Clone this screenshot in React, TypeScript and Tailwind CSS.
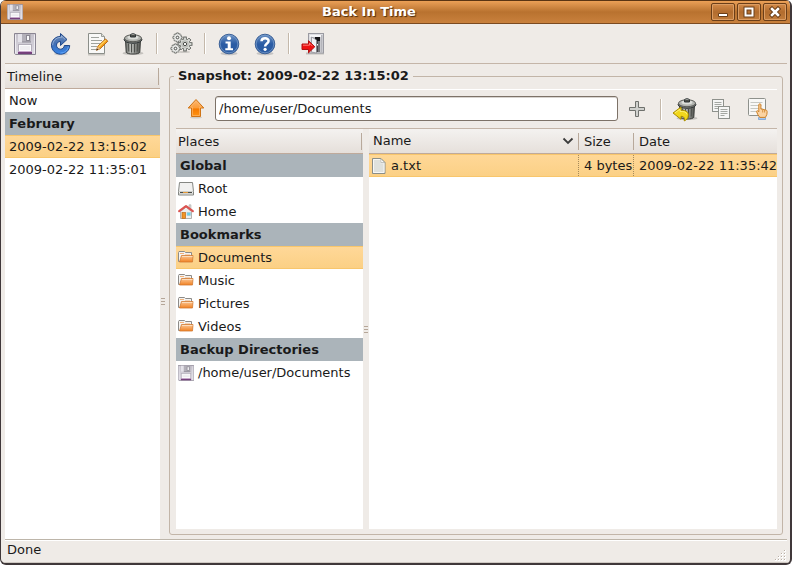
import React, { useId, useState } from "react";

type IconProps = { size?: number };

function FloppyIcon({ size = 24 }: IconProps) {
  const id = useId();
  return (
    <svg width={size} height={size} viewBox={size < 20 ? "1 1 22 22" : "0 0 24 24"} aria-hidden="true">
      <defs>
        <linearGradient id={id} x1="0" y1="0" x2="0" y2="1">
          <stop offset="0" stopColor="#c3bfc9" />
          <stop offset="1" stopColor="#dfdce4" />
        </linearGradient>
      </defs>
      <path d="M1.500 1.500h21v21h-20l-1-1z" fill={`url(#${id})`} stroke="#8a8592" />
      <path d="M2.500 2.500v18.500M21.500 2.500v19" stroke="#eeecf2" />
      <rect x="5" y="2" width="4" height="8" fill="#e4e2e9" />
      <rect x="9" y="2" width="9" height="8" fill="#b3b0b9" />
      <path d="M9 10h9" stroke="#8f8b97" />
      <rect x="13.500" y="3.500" width="3" height="5" fill="#f8f8fa" stroke="#8b8892" />
      <rect x="5.500" y="12.500" width="13" height="9" fill="#fcfbfd" stroke="#b3aeba" />
      <path d="M7 15h10M7 17h10" stroke="#e3e0e6" />
      <rect x="5" y="19" width="14" height="1" fill="#c9a8cd" />
      <rect x="5" y="20" width="14" height="2" fill="#75407c" />
    </svg>
  );
}

function RefreshIcon() {
  return (
    <svg width="24" height="24" viewBox="0 0 24 24" aria-hidden="true">
      <defs>
        <linearGradient id="refresh" x1="0" y1="0" x2="0" y2="1">
          <stop offset="0" stopColor="#7590b8" />
          <stop offset="0.500" stopColor="#426fb4" />
          <stop offset="1" stopColor="#3585ea" />
        </linearGradient>
      </defs>
      <ellipse cx="12" cy="22" rx="7" ry="1.300" fill="#cfccc9" />
      <path
        d="M11.500 1.500v2.800C6.500 4.500 2.500 8.300 2.500 13.200c0 5 4 9 9 9s9-3.700 9.200-8.700h-5.400c-.1 2.100-1.600 3.700-3.800 3.700-2.300 0-4-1.700-4-4 0-2 1.600-3.700 4-3.800v4.100l6.500-6z"
        fill="url(#refresh)"
        stroke="#20488a"
        strokeLinejoin="round"
      />
      <path d="M3.700 13.200c0-4.300 3.400-7.700 7.800-7.800h1V4l3.800 3.500" fill="none" stroke="#a3bbdd" strokeWidth="0.800" />
      <path d="M19.400 14.500c-.6 3.800-3.800 6.500-7.900 6.500" fill="none" stroke="#6fb0ff" strokeWidth="0.800" />
    </svg>
  );
}

function EditIcon() {
  return (
    <svg width="24" height="24" viewBox="0 0 24 24" aria-hidden="true">
      <path d="M3 22.500h17" stroke="#c8c5c0" strokeWidth="2" />
      <path d="M3.500 1.500h13l3 3v17h-16z" fill="#f8f8f7" stroke="#8b8e89" strokeLinejoin="round" />
      <path d="M16.500 1.500v3h3" fill="#dedfdc" stroke="#9b9e98" />
      <path d="M6 5.500h8M6 8.500h11M6 11.500h9M6 14.500h6M6 17.500h5" stroke="#9fa29d" />
      <path d="M11.500 18.200l1.300-3.900 7.700-7.400 2.300 2.300-7.700 7.600z" fill="#f6a01a" stroke="#b05b05" strokeWidth="0.900" strokeLinejoin="round" />
      <path d="M13.800 14.800l7-6.700" stroke="#ffd35c" strokeWidth="1.200" />
      <path d="M11.500 18.200l1.300-3.900 2.300 2.500z" fill="#e3bd8b" />
      <path d="M11.300 18.400l.7-2 1.200 1.300z" fill="#2b1a08" />
    </svg>
  );
}

function TrashShape() {
  const id = useId();
  return (
    <>
      <defs>
        <linearGradient id={id} x1="0" x2="1">
          <stop offset="0" stopColor="#646662" />
          <stop offset="0.350" stopColor="#c0c2be" />
          <stop offset="0.650" stopColor="#8a8c88" />
          <stop offset="1" stopColor="#50524e" />
        </linearGradient>
      </defs>
      <ellipse cx="12" cy="21.300" rx="10.500" ry="1.800" fill="#c4c1bd" />
      <path d="M4.500 8l.7 12.300c1 2.300 12.600 2.300 13.600 0L19.500 8z" fill={`url(#${id})`} stroke="#3c3e3b" />
      <path d="M7.500 11.500l.3 8M10.500 12v8.500M13.500 12v8.500M16.500 11.500l-.3 8" stroke="#4d4f4b" />
      <ellipse cx="12" cy="7.500" rx="8.900" ry="3.800" fill="#787a76" stroke="#2e3436" />
      <ellipse cx="12" cy="6.200" rx="8.500" ry="3.500" fill="#b2b4b0" stroke="#4b4d49" strokeWidth="0.800" />
      <ellipse cx="12" cy="5.500" rx="5.500" ry="1.900" fill="#dcdeda" />
      <path d="M9.500 5V3c0-1.700 5-1.700 5 0v2z" fill="#4a4c48" stroke="#2e3436" />
      <path d="M10.500 2.700c.7-.5 2.300-.5 3 0" stroke="#b0b2ae" fill="none" />
    </>
  );
}

function TrashIcon() {
  return (
    <svg width="24" height="24" viewBox="0 0 24 24" aria-hidden="true">
      <TrashShape />
    </svg>
  );
}

function RestoreIcon() {
  return (
    <svg width="26" height="26" viewBox="0 0 26 26" aria-hidden="true">
      <g transform="translate(3 1)">
        <TrashShape />
      </g>
      <path
        d="M1 17l8-6v3.300c5.500-.4 7.800 2.200 7.300 5.700-.3 2.400-1.900 4.100-4.100 4.900.8-2.700-.1-4.500-3.200-4.600v3z"
        fill="#f2d71b"
        stroke="#a88c00"
        strokeLinejoin="round"
      />
      <path d="M3 16.800l5-3.600v2.200c4-.2 6.500.8 7 3" fill="none" stroke="#fff27f" strokeWidth="0.900" />
    </svg>
  );
}

const squareTeeth = [0, 90, 180, 270];
const roundTeeth = [0, 45, 90, 135, 180, 225, 270, 315];

function SmallGear({ x, y }: { x: number; y: number }) {
  return (
    <g transform={`translate(${x} ${y})`}>
      {squareTeeth.map((a) => (
        <path key={a} d="M-1-4.500h2v3h-2z" transform={`rotate(${a})`} fill="#e6e7e5" stroke="#5b5e5a" />
      ))}
      <rect x="-3.500" y="-3.500" width="7" height="7" rx="1" fill="#e6e7e5" stroke="#5b5e5a" strokeDasharray="1.500 0.500" />
      <path d="M-1-4h2v8h-2zM-4-1h8v2h-8z" fill="#e6e7e5" />
      <circle r="1.300" fill="#f8f8f8" stroke="#4b4e4a" />
    </g>
  );
}

function GearsIcon() {
  return (
    <svg width="24" height="24" viewBox="0 0 24 24" aria-hidden="true">
      <ellipse cx="15" cy="20" rx="6" ry="1" fill="#cbc8c4" />
      <g transform="translate(16 12)">
        {roundTeeth.map((a) => (
          <rect key={a} x="-1.300" y="-7" width="2.600" height="4" transform={`rotate(${a})`} fill="#d3d5d1" stroke="#5b5e5a" strokeWidth="0.900" />
        ))}
        <circle r="5" fill="#d8dad6" stroke="#6b6e6a" strokeWidth="0.800" />
        {roundTeeth.map((a) => (
          <rect key={a} x="-0.900" y="-6" width="1.800" height="3" transform={`rotate(${a})`} fill="#d8dad6" />
        ))}
        <circle r="3.200" fill="none" stroke="#a5a8a3" strokeWidth="0.800" />
        <circle r="1.700" fill="#f5f4f2" stroke="#4b4e4a" />
      </g>
      <SmallGear x={8.500} y={5.500} />
      <SmallGear x={6.500} y={16.500} />
    </svg>
  );
}

function BlueDisc({ kind }: { kind: "info" | "help" }) {
  const id = useId();
  return (
    <svg width="24" height="24" viewBox="0 0 24 24" aria-hidden="true">
      <defs>
        <linearGradient id={id} x1="0" y1="0" x2="0" y2="1">
          <stop offset="0" stopColor="#6d93c5" />
          <stop offset="0.500" stopColor="#2b5ca4" />
          <stop offset="1" stopColor="#2a5ba2" />
        </linearGradient>
      </defs>
      <ellipse cx="12" cy="21.500" rx="8.500" ry="1.800" fill="#c5c3c3" />
      <circle cx="12" cy="12" r="9.800" fill={`url(#${id})`} stroke="#3a5f96" />
      <circle cx="12" cy="12" r="8.800" fill="none" stroke="#7d9fcc" strokeWidth="0.700" />
      {kind === "info" ? (
        <>
          <circle cx="12" cy="6.300" r="2" fill="#fff" />
          <path d="M8.500 9.500h5.200v6.800h2.300v1.900H8.300v-1.900h2.400v-4.900H8.500z" fill="#fff" />
        </>
      ) : (
        <>
          <path d="M8.500 9.300C8.600 5.400 15.700 5.300 15.600 9c0 2.500-3.500 2.700-3.500 5.500" fill="none" stroke="#fff" strokeWidth="2.500" />
          <circle cx="12.100" cy="17.300" r="1.600" fill="#fff" />
        </>
      )}
    </svg>
  );
}

function ExitIcon() {
  return (
    <svg width="24" height="24" viewBox="0 0 24 24" aria-hidden="true">
      <path d="M5 20.500h18v2H5z" fill="#c3c0bd" />
      <rect x="7.500" y="1.500" width="15" height="19.500" fill="#dedee2" stroke="#9a9aa1" />
      <path d="M20.500 3v17.500" stroke="#b5b5bb" strokeWidth="2" />
      <rect x="9" y="3" width="11" height="2" fill="#f6f6f8" />
      <path d="M10 5h9v16h-9z" fill="#b8b8be" />
      <path d="M14 5h5v15h-5z" fill="#161618" />
      <path d="M16.500 9h2.500v11h-2.500z" fill="#75757a" />
      <path d="M10.500 5l5 3v13l-5-1z" fill="#f1f1f4" stroke="#8b8b91" strokeWidth="0.700" />
      <path d="M16.500 12v1.500" stroke="#fff" />
      <path d="M1 12h6.500V8.700l6.300 6.100-6.300 6V17.500H1z" fill="#ee1111" stroke="#b01010" strokeLinejoin="round" />
      <path d="M2 13.200h6.500v-2l3 3" fill="none" stroke="#ff8a80" strokeWidth="0.900" />
    </svg>
  );
}

function UpIcon() {
  return (
    <svg width="24" height="24" viewBox="0 0 24 24" aria-hidden="true">
      <defs>
        <linearGradient id="up" x1="0" y1="0" x2="0" y2="1">
          <stop offset="0" stopColor="#fcb671" />
          <stop offset="0.500" stopColor="#fb9c3a" />
          <stop offset="0.550" stopColor="#f57900" />
          <stop offset="1" stopColor="#ff9414" />
        </linearGradient>
      </defs>
      <ellipse cx="12" cy="20.500" rx="6" ry="1" fill="#d0ccc6" />
      <path d="M12 2.500l7.800 8.500h-3.300v8.500h-9V11H4.200z" fill="url(#up)" stroke="#cf7417" strokeLinejoin="round" />
      <path d="M12 4.200l5.500 6h-2v8.300h-7v-8.300h-2z" fill="none" stroke="#ffbe78" strokeWidth="0.600" />
    </svg>
  );
}

function PlusIcon() {
  return (
    <svg width="24" height="24" viewBox="0 0 24 24" aria-hidden="true">
      <path d="M10.500 4.500h3v6h6v3h-6v6h-3v-6h-6v-3h6z" fill="#cfd0cd" stroke="#6f716d" />
    </svg>
  );
}

function CopyIcon() {
  return (
    <svg width="24" height="24" viewBox="0 0 24 24" aria-hidden="true">
      <rect x="3.500" y="2.500" width="11" height="12" fill="#f6f6f5" stroke="#8e918c" />
      <path d="M5.500 5.500h7M5.500 7.500h7M5.500 9.500h7M5.500 11.500h4" stroke="#a4a7a2" />
      <rect x="9.500" y="9.500" width="11" height="12" fill="#f6f6f5" stroke="#8e918c" />
      <path d="M11.500 12.500h7M11.500 14.500h7M11.500 16.500h7M11.500 18.500h4" stroke="#a4a7a2" />
    </svg>
  );
}

function SelectIcon() {
  return (
    <svg width="24" height="24" viewBox="0 0 24 24" aria-hidden="true">
      <rect x="3.500" y="1.500" width="17" height="17" rx="1" fill="#f8f8f7" stroke="#8e918c" />
      <path d="M5.500 5.500h12M5.500 8.500h11M5.500 11.500h12M5.500 14.500h6" stroke="#c6c8c4" />
      <path d="M13.500 20.500h7v2h-7z" fill="#a9c8ee" stroke="#5c8fcd" strokeWidth="0.600" />
      <path
        d="M13.800 7.800c.1-1.400 2-1.400 2.100 0v4.200l1.800.3 1.700.3 1.600.5c1 .3 1.100 1 1.100 2l-.3 2.600-1.400 2.700h-5.600l-1.900-2.700-1.300-3c-.3-1.100 1.200-1.500 2.200.2z"
        fill="#fbd3a2"
        stroke="#cf8126"
        strokeLinejoin="round"
      />
      <path d="M17.700 12.500v3M19.600 13v2.500" stroke="#cf8126" strokeWidth="0.800" />
    </svg>
  );
}

function DriveIcon() {
  return (
    <svg width="16" height="16" viewBox="0 0 16 16" aria-hidden="true">
      <path d="M1.500 1.500h13l1 9v3.500H.5v-3.500z" fill="#f1f1f0" stroke="#858783" strokeLinejoin="round" />
      <path d="M1 10.500h14" stroke="#cfd1cd" />
      <path d="M2 11.500h12" stroke="#4a4c48" />
      <path d="M5 11.500h5" stroke="#e59a3a" />
      <path d="M1 13h14" stroke="#b5b7b3" />
    </svg>
  );
}

function HomeIcon() {
  return (
    <svg width="16" height="16" viewBox="0 0 16 16" aria-hidden="true">
      <path d="M11 .8h2v5h-2z" fill="#d8d8d6" stroke="#a5a5a3" strokeWidth="0.500" />
      <path d="M2.500 7.500L8 3l5.500 4.500v7h-11z" fill="#eeeeed" stroke="#a0a29e" strokeWidth="0.800" />
      <rect x="4" y="8.500" width="3.500" height="6" fill="#f29422" stroke="#b9691a" strokeWidth="0.700" />
      <rect x="9" y="8.500" width="3.500" height="3" fill="#67d0ec" stroke="#a6c9d4" strokeWidth="0.600" />
      <path d="M1.200 7.200L8 2.200l6.800 5" fill="none" stroke="#dc5552" strokeWidth="2.200" strokeLinejoin="round" strokeLinecap="round" />
    </svg>
  );
}

function FolderIcon() {
  const id = useId();
  return (
    <svg width="16" height="16" viewBox="0 0 16 16" aria-hidden="true">
      <defs>
        <linearGradient id={id} x1="0" y1="0" x2="0" y2="1">
          <stop offset="0" stopColor="#fbc898" />
          <stop offset="1" stopColor="#f28222" />
        </linearGradient>
      </defs>
      <path d="M.5 11.500v-9l.5-1h5.500l1 1h6v9z" fill="#f4f3f1" stroke="#8d8b88" strokeLinejoin="round" />
      <path d="M2 3.500h4M7 5h5" stroke="#f3b27a" />
      <path d="M3.500 5.500h11.500l-.5 6.500h-13z" fill={`url(#${id})`} stroke="#d07a32" strokeWidth="0.800" strokeLinejoin="round" />
      <path d="M4 6.500h10.500" stroke="#fde3c9" strokeWidth="0.800" />
    </svg>
  );
}

function FileIcon() {
  return (
    <svg width="14" height="16" viewBox="0 0 14 16" aria-hidden="true">
      <path d="M.5.5h8.500l4 4v11H.5z" fill="#dfe1dd" stroke="#8b8e88" strokeLinejoin="round" />
      <path d="M1.500 1.500h7v3.500h3.500v9.500H1.500z" fill="none" stroke="#f7f7f6" />
      <path d="M8.800.8v3.800h3.900z" fill="#fafafa" stroke="#a7aaa4" strokeWidth="0.700" />
    </svg>
  );
}

function ToolButton({ label, children }: { label: string; children: React.ReactNode }) {
  return (
    <button type="button" aria-label={label} title={label} className="flex h-9 w-9 shrink-0 items-center justify-center rounded-sm hover:bg-white/50">
      {children}
    </button>
  );
}

function Separator() {
  return (
    <div className="flex w-3 shrink-0 justify-center">
      <div className="h-[21px] w-[2px] border-r border-l border-r-white border-l-[#c4b8aa]" />
    </div>
  );
}

function Grip() {
  return (
    <div className="flex flex-col gap-[2px]">
      <i className="h-px w-1 bg-[#b5a698]" />
      <i className="h-px w-1 bg-[#b5a698]" />
      <i className="h-px w-1 bg-[#b5a698]" />
    </div>
  );
}

function ListHeader({ children }: { children: React.ReactNode }) {
  return (
    <div className="flex h-[25px] shrink-0 items-center border-b border-[#bfaa9b] bg-linear-to-b from-[#f4f2f0] to-[#e5dfda] pr-px">
      <span className="h-[17px] flex-1 border-r border-[#b8a99b] pl-[2px] leading-[18px]">{children}</span>
    </div>
  );
}

function GroupRow({ children }: { children: React.ReactNode }) {
  return <h2 className="h-[23px] bg-[#abb4ba] pl-1 font-bold leading-[23px]">{children}</h2>;
}

type RowProps = { selected: boolean; onSelect: () => void; icon?: React.ReactNode; children: React.ReactNode };

function Row({ selected, onSelect, icon, children }: RowProps) {
  const look = selected ? "border-[#f8c66c] bg-linear-to-b from-[#ffd898] to-[#fbd085]" : "border-transparent";
  return (
    <button type="button" aria-pressed={selected} onClick={onSelect} className={`flex h-[23px] w-full items-center border-y text-left ${icon ? "gap-1 pl-[2px]" : "pl-1"} ${look}`}>
      {icon}
      <span className="whitespace-nowrap">{children}</span>
    </button>
  );
}

function WindowButton({ label, children }: { label: string; children: React.ReactNode }) {
  return (
    <button
      type="button"
      aria-label={label}
      className="flex h-[18px] w-6 items-center justify-center rounded-[2px] border border-[#6b3e18] bg-linear-to-b from-[#d48b49] via-[#b26c2e] to-[#c27d3c] shadow-[inset_0_0_0_1px_#dc9d63]"
    >
      <svg width="12" height="12" viewBox="0 0 12 12" aria-hidden="true">
        {children}
      </svg>
    </button>
  );
}

const places = ["Documents", "Music", "Pictures", "Videos"];

export default function App() {
  const [snapshot, setSnapshot] = useState("2009-02-22 13:15:02");
  const [place, setPlace] = useState("Documents");
  const [path, setPath] = useState("/home/user/Documents");

  return (
    <div className="flex h-screen flex-col overflow-hidden rounded-md border-r-2 border-b-2 border-l border-[#40383a] bg-[#efebe7] font-['DejaVu_Sans',sans-serif] text-[13px] leading-4 text-[#1a1a1a]">
      <header className="flex h-6 shrink-0 items-center border-t border-b border-t-[#5a3413] border-b-[#7b4a20] bg-linear-to-b from-[#eba057] via-[#b9722f] to-[#c9813d] pr-[3px] pl-[6px]">
        <FloppyIcon size={16} />
        <h1 className="flex-1 pl-1 text-center font-bold text-white [text-shadow:1px_1px_1px_#4a2a0c]">Back In Time</h1>
        <div className="flex gap-[2px]">
          <WindowButton label="Minimize">
            <path d="M1.500 7.500h9v3h-9z" fill="#fff" stroke="#6b3e18" />
          </WindowButton>
          <WindowButton label="Maximize">
            <path d="M2.500 2.500h7v7h-7z" fill="none" stroke="#6b3e18" strokeWidth="4" />
            <path d="M2.500 2.500h7v7h-7z" fill="none" stroke="#fff" strokeWidth="2" />
          </WindowButton>
          <WindowButton label="Close">
            <path d="M3 3l6 6M9 3l-6 6" stroke="#6b3e18" strokeWidth="4.500" strokeLinecap="square" />
            <path d="M3 3l6 6M9 3l-6 6" stroke="#fff" strokeWidth="2.500" strokeLinecap="square" />
          </WindowButton>
        </div>
      </header>

      <div className="flex min-h-0 flex-1 flex-col border-b border-[#cfc9c3] pr-[3px] pl-1">
        <div role="toolbar" aria-label="Main" className="flex h-10 shrink-0 items-center border-b border-[#c4b5a8] px-[2px]">
          <ToolButton label="Take snapshot"><FloppyIcon /></ToolButton>
          <ToolButton label="Refresh"><RefreshIcon /></ToolButton>
          <ToolButton label="Snapshot name"><EditIcon /></ToolButton>
          <ToolButton label="Remove snapshot"><TrashIcon /></ToolButton>
          <Separator />
          <ToolButton label="Settings"><GearsIcon /></ToolButton>
          <Separator />
          <ToolButton label="About"><BlueDisc kind="info" /></ToolButton>
          <ToolButton label="Help"><BlueDisc kind="help" /></ToolButton>
          <Separator />
          <ToolButton label="Exit"><ExitIcon /></ToolButton>
        </div>

        <main className="flex min-h-0 flex-1">
          <nav aria-label="Timeline" className="flex w-[155px] shrink-0 flex-col bg-white">
            <ListHeader>Timeline</ListHeader>
            <Row selected={snapshot === "Now"} onSelect={() => setSnapshot("Now")}>Now</Row>
            <GroupRow>February</GroupRow>
            {["2009-02-22 13:15:02", "2009-02-22 11:35:01"].map((s) => (
              <Row key={s} selected={snapshot === s} onSelect={() => setSnapshot(s)}>{s}</Row>
            ))}
          </nav>
          <div className="flex w-[6px] shrink-0 items-center justify-center">
            <Grip />
          </div>

          <fieldset className="mt-[2px] mr-1 mb-1 ml-[3px] flex min-h-0 min-w-0 flex-1 flex-col rounded-[3px] border border-[#c2b5a8] pr-[5px] pb-[5px] pl-[6px]">
            <legend className="-ml-[2px] px-1 font-bold leading-5">Snapshot: {snapshot}</legend>
            <div role="toolbar" aria-label="Files" className="mt-[3px] flex h-10 shrink-0 items-center border-t border-b border-t-white border-b-[#c4b5a8] px-[2px]">
              <ToolButton label="Up"><UpIcon /></ToolButton>
              <input
                aria-label="Path"
                value={path}
                onChange={(e) => setPath(e.target.value)}
                className="mx-px mb-px h-[25px] min-w-0 flex-1 rounded-[3px] border border-[#7d7268] bg-white px-[3px] shadow-[inset_0_1px_0_#d8d4d0] outline-none"
              />
              <ToolButton label="Add bookmark"><PlusIcon /></ToolButton>
              <Separator />
              <ToolButton label="Restore"><RestoreIcon /></ToolButton>
              <ToolButton label="Copy"><CopyIcon /></ToolButton>
              <ToolButton label="Snapshots"><SelectIcon /></ToolButton>
            </div>

            <div className="flex min-h-0 flex-1">
              <nav aria-label="Places" className="flex w-[187px] shrink-0 flex-col bg-white">
                <ListHeader>Places</ListHeader>
                <GroupRow>Global</GroupRow>
                <Row icon={<DriveIcon />} selected={place === "Root"} onSelect={() => setPlace("Root")}>Root</Row>
                <Row icon={<HomeIcon />} selected={place === "Home"} onSelect={() => setPlace("Home")}>Home</Row>
                <GroupRow>Bookmarks</GroupRow>
                {places.map((p) => (
                  <Row key={p} icon={<FolderIcon />} selected={place === p} onSelect={() => setPlace(p)}>{p}</Row>
                ))}
                <GroupRow>Backup Directories</GroupRow>
                <Row icon={<FloppyIcon size={16} />} selected={place === "backup"} onSelect={() => setPlace("backup")}>/home/user/Documents</Row>
              </nav>
              <div className="flex w-[6px] shrink-0 items-center justify-center">
                <Grip />
              </div>
              <div className="min-w-0 flex-1 overflow-hidden bg-white">
                <table className="w-full table-fixed border-separate border-spacing-0 whitespace-nowrap">
                  <colgroup>
                    <col />
                    <col className="w-[55px]" />
                    <col className="w-[143px]" />
                  </colgroup>
                  <thead>
                    <tr className="h-[25px] bg-linear-to-b from-[#f4f2f0] to-[#e5dfda] text-left">
                      <th className="border-b border-[#bfaa9b] p-0 font-normal">
                        <div className="flex h-[17px] items-center justify-between border-r border-[#b8a99b] pr-1 pl-1 leading-[18px]">
                          Name
                          <svg width="12" height="8" viewBox="0 0 12 8" aria-hidden="true">
                            <path d="M1.500 1.500L6 6l4.500-4.500" fill="none" stroke="#3c3c3c" strokeWidth="1.800" />
                          </svg>
                        </div>
                      </th>
                      <th className="border-b border-[#bfaa9b] p-0 font-normal">
                        <div className="h-[17px] border-r border-[#b8a99b] pl-[5px] leading-[18px]">Size</div>
                      </th>
                      <th className="border-b border-[#bfaa9b] p-0 font-normal">
                        <div className="h-[17px] pl-[5px] leading-[18px]">Date</div>
                      </th>
                    </tr>
                  </thead>
                  <tbody>
                    <tr className="h-[23px] bg-linear-to-b from-[#ffd898] to-[#fbd085]">
                      <td className="border-y border-[#f8c66c] p-0">
                        <div className="flex h-[21px] items-center gap-[5px] border-r border-dotted border-[#a58a5a] pl-[3px]">
                          <FileIcon />
                          a.txt
                        </div>
                      </td>
                      <td className="border-y border-[#f8c66c] p-0">
                        <div className="h-[21px] border-r border-dotted border-[#a58a5a] pl-[5px] leading-[21px]">4 bytes</div>
                      </td>
                      <td className="border-y border-[#f8c66c] p-0 pl-[5px]">2009-02-22 11:35:42</td>
                    </tr>
                  </tbody>
                </table>
              </div>
            </div>
          </fieldset>
        </main>

        <footer className="flex h-[23px] shrink-0 justify-between border-t border-[#bdb5a9] pl-[2px] shadow-[inset_0_1px_0_#fff]">
          <span className="pt-[2px]">Done</span>
          <svg width="12" height="12" viewBox="0 0 12 12" className="self-end" aria-hidden="true">
            <path d="M9 0h2v2H9zM6 3h2v2H6zM9 3h2v2H9zM3 6h2v2H3zM6 6h2v2H6zM9 6h2v2H9zM0 9h2v2H0zM3 9h2v2H3zM6 9h2v2H6zM9 9h2v2H9z" fill="#fff" />
            <path d="M9 0h1v1H9zM6 3h1v1H6zM9 3h1v1H9zM3 6h1v1H3zM6 6h1v1H6zM9 6h1v1H9zM0 9h1v1H0zM3 9h1v1H3zM6 9h1v1H6zM9 9h1v1H9z" fill="#b9aea4" />
          </svg>
        </footer>
      </div>
    </div>
  );
}
